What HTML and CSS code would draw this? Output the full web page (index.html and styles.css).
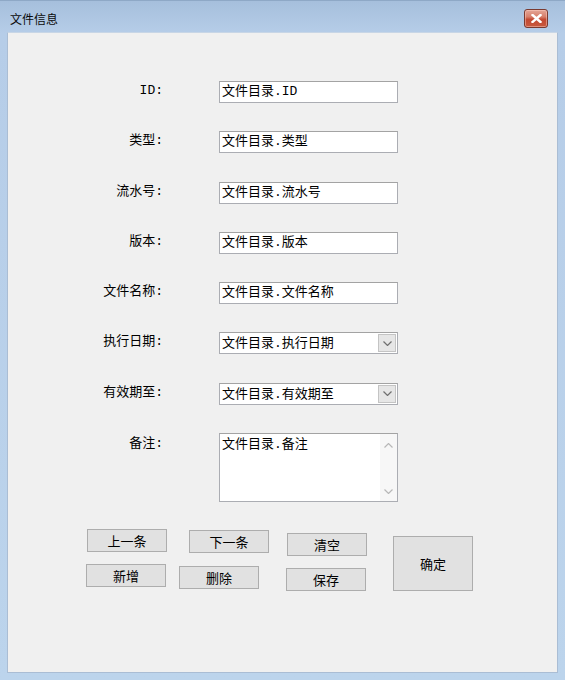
FILE: index.html
```html
<!DOCTYPE html>
<html lang="zh-CN">
<head>
<meta charset="utf-8">
<title>文件信息</title>
<link rel="stylesheet" href="styles.css">
</head>
<body>
<div class="window">
  <div class="titlebar">
    <span class="title">文件信息</span>
    <div class="close">
      <svg width="11" height="9" viewBox="0 0 11 9"><path d="M1.5 1 L9.5 8 M9.5 1 L1.5 8" stroke="#fff" stroke-width="2.4" stroke-linecap="square"/></svg>
    </div>
  </div>
  <div class="client">
    <div class="form">
      <span class="lbl">ID:</span>
      <div class="field">文件目录.ID</div>

      <span class="lbl">类型:</span>
      <div class="field">文件目录.类型</div>

      <span class="lbl">流水号:</span>
      <div class="field">文件目录.流水号</div>

      <span class="lbl">版本:</span>
      <div class="field">文件目录.版本</div>

      <span class="lbl">文件名称:</span>
      <div class="field">文件目录.文件名称</div>

      <span class="lbl">执行日期:</span>
      <div class="field combo">
        <span class="val">文件目录.执行日期</span>
        <span class="dd"><svg width="9" height="5" viewBox="0 0 9 5"><path d="M0.5 0.5 L4.5 4.5 L8.5 0.5" fill="none" stroke="#707070" stroke-width="1.2"/></svg></span>
      </div>

      <span class="lbl">有效期至:</span>
      <div class="field combo">
        <span class="val">文件目录.有效期至</span>
        <span class="dd"><svg width="9" height="5" viewBox="0 0 9 5"><path d="M0.5 0.5 L4.5 4.5 L8.5 0.5" fill="none" stroke="#707070" stroke-width="1.2"/></svg></span>
      </div>

      <span class="lbl lbl-memo">备注:</span>
      <div class="field memo">
        <span class="val">文件目录.备注</span>
        <div class="vscroll">
          <svg width="9" height="5" viewBox="0 0 9 5"><path d="M0.5 4.5 L4.5 0.5 L8.5 4.5" fill="none" stroke="#b8b8b8" stroke-width="1.2"/></svg>
          <svg width="9" height="5" viewBox="0 0 9 5"><path d="M0.5 0.5 L4.5 4.5 L8.5 0.5" fill="none" stroke="#b8b8b8" stroke-width="1.2"/></svg>
        </div>
      </div>
    </div>

    <div class="buttons">
      <div class="col col1">
        <button class="btn b-prev">上一条</button>
        <button class="btn b-new">新增</button>
      </div>
      <div class="col col2">
        <button class="btn b-next">下一条</button>
        <button class="btn b-del">删除</button>
      </div>
      <div class="col col3">
        <button class="btn b-clear">清空</button>
        <button class="btn b-save">保存</button>
      </div>
      <div class="col col4">
        <button class="btn big">确定</button>
      </div>
    </div>
  </div>
</div>
</body>
</html>
```

FILE: styles.css
```css
* { box-sizing: border-box; }

html, body {
  margin: 0;
  padding: 0;
}

body {
  width: 565px;
  height: 680px;
  overflow: hidden;
  font-family: "Liberation Mono", "Noto Sans CJK SC", monospace;
  color: #000;
}

.window {
  width: 565px;
  height: 680px;
  display: flex;
  flex-direction: column;
  background: linear-gradient(to bottom, #a6bfdc 0px, #b6cde8 32px, #bcd4ec 100%);
  border-top: 1px solid #8ea8c6;
}

.titlebar {
  height: 31px;
  display: flex;
  align-items: flex-start;
  justify-content: space-between;
  padding: 0 17px 0 10px;
}

.title {
  font-family: "Noto Sans CJK SC", sans-serif;
  font-size: 12px;
  line-height: 16px;
  margin-top: 10px;
  color: #0b0b0b;
}

.close {
  width: 24px;
  height: 19px;
  margin-top: 8px;
  border: 1px solid #7a3a30;
  border-radius: 3px;
  background: linear-gradient(to bottom, #e4a596 0%, #d7806c 40%, #c34a33 55%, #c85a3f 100%);
  display: flex;
  align-items: center;
  justify-content: center;
  box-shadow: inset 0 0 0 1px rgba(255, 210, 200, 0.45);
}

.client {
  margin: 0 7px;
  height: 641px;
  background: #f0f0f0;
  border: 1px solid #aabdd4;
  border-top-color: #c8d6e6;
}

.form {
  display: grid;
  grid-template-columns: 155px 179px;
  column-gap: 56px;
  row-gap: 28.3px;
  padding-top: 48px;
}

.lbl {
  text-align: right;
  font-size: 13px;
  line-height: 16px;
  padding-top: 2px;
  white-space: nowrap;
}

.lbl-memo {
  padding-top: 3px;
}

.field {
  height: 22px;
  background: #fff;
  border: 1px solid #abadb3;
  border-top-color: #a3a3a3;
  font-size: 13px;
  line-height: 19px;
  padding-left: 2px;
  white-space: nowrap;
  display: flex;
  align-items: flex-start;
}

.combo {
  justify-content: space-between;
  padding-right: 1px;
}

.combo .val {
  padding-top: 1px;
}

.dd {
  width: 18px;
  height: 18px;
  margin-top: 1px;
  background: #e6e6e6;
  border: 1px solid #c4c4c4;
  display: flex;
  align-items: center;
  justify-content: center;
}

.memo {
  height: 69px;
  justify-content: space-between;
  padding-right: 0;
}

.memo .val {
  padding-top: 1px;
}

.vscroll {
  width: 17px;
  height: 100%;
  background: #f7f7f7;
  display: flex;
  flex-direction: column;
  justify-content: space-between;
  align-items: center;
  padding: 9px 0 7px;
}

.buttons {
  display: flex;
  align-items: flex-start;
  padding-left: 78px;
  padding-top: 27px;
}

.col {
  display: flex;
  flex-direction: column;
}

.btn {
  width: 80px;
  height: 23px;
  padding: 0;
  margin: 0;
  background: #e1e1e1;
  border: 1px solid #adadad;
  font-family: "Noto Sans CJK SC", sans-serif;
  font-size: 13px;
  line-height: 19px;
  color: #000;
}

.b-prev { margin-left: 1px; }
.b-new { margin-top: 12px; }

.col2 { margin-left: 12px; }
.b-next { margin-left: 10px; margin-top: 1px; }
.b-del { margin-top: 13px; }

.col3 { margin-left: 17px; }
.b-clear { margin-left: 1px; margin-top: 4px; }
.b-save { margin-top: 12px; }

.col4 { margin-left: 26px; margin-top: 7px; }
.big { height: 55px; }
```
